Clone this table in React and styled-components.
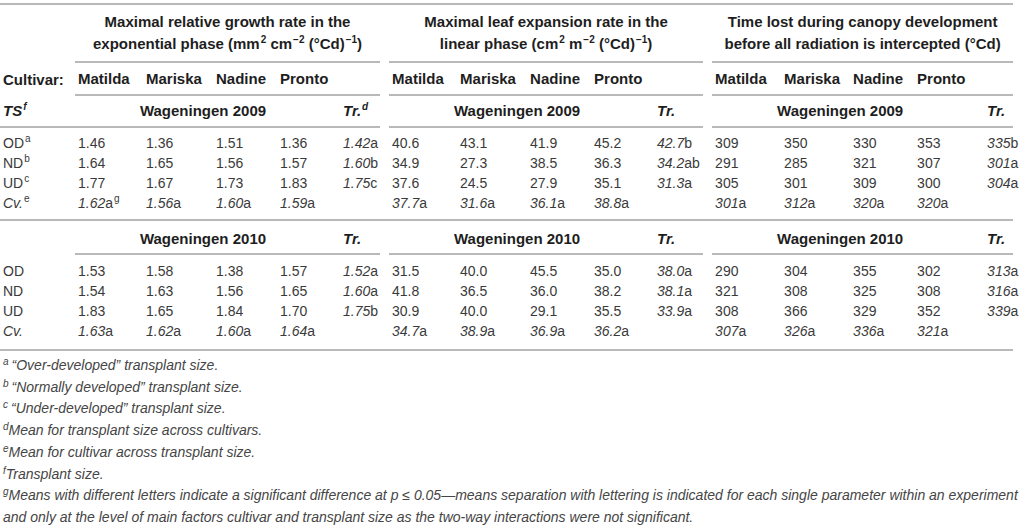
import React from "react";
import styled, { createGlobalStyle } from "styled-components";

const GlobalStyle = createGlobalStyle`
  body {
    margin: 0;
    background: #fff;
    font-family: "Liberation Sans", Arial, sans-serif;
    color: #3a3a3a;
  }
`;

const RULE = "2px solid #b9b9b9";

const Page = styled.div`
  width: 1013px;
  padding-top: 3px;
`;

const Table = styled.table`
  width: 1013px;
  table-layout: fixed;
  border-collapse: separate;
  border-spacing: 0;
  border-top: ${RULE};
  font-size: 14px;
`;

const Col = styled.col`
  width: ${(p) => p.$w}px;
`;

const Cell = styled.td`
  padding: ${(p) => p.$pt || 0}px ${(p) => p.$pr || 0}px ${(p) => p.$pb || 0}px 3px;
  line-height: 20px;
  white-space: nowrap;
  vertical-align: middle;
  text-align: ${(p) => (p.$center ? "center" : "left")};
  border-bottom: ${(p) => (p.$rule ? RULE : "none")};
  font-style: ${(p) => (p.$italic ? "italic" : "normal")};
`;

const HeadCell = styled(Cell)`
  font-size: 15px;
  font-weight: bold;
  color: #1e1e1e;
`;

const TitleCell = styled.td`
  padding: 6px 0;
  font-size: 15px;
  line-height: 22px;
  text-align: center;
  font-weight: bold;
  color: #1e1e1e;
  white-space: nowrap;
  border-bottom: ${RULE};
`;

const Gap = styled.td`
  padding: 0;
  border-bottom: ${(p) => (p.$rule ? RULE : "none")};
`;

const Sup = styled.sup`
  font-size: 10px;
  line-height: 0;
  vertical-align: 6px;
  margin-left: 1px;
`;

const Num = styled.i`
  font-style: italic;
`;

const Notes = styled.div`
  margin-top: 4px;
  padding-left: 3px;
  font-size: 14px;
  line-height: 21.7px;
  font-style: italic;
  color: #454545;
`;

const Note = styled.div`
  white-space: nowrap;
`;

const NoteMark = styled.sup`
  font-size: 10px;
  line-height: 0;
  vertical-align: 5px;
  margin-right: ${(p) => (p.$tight ? 0 : 3)}px;
`;

const COLS = [75, 68, 70, 64, 63, 40, 9, 68, 70, 64, 63, 49, 9, 69, 69, 64, 70, 29];
const CULTIVARS = ["Matilda", "Mariska", "Nadine", "Pronto"];

const GROUPS = [
  {
    title: [
      "Maximal relative growth rate in the",
      <>
        exponential phase (mm<Sup>2</Sup> cm<Sup>−2</Sup> (°Cd)<Sup>−1</Sup>)
      </>,
    ],
    shift: 12,
  },
  {
    title: [
      "Maximal leaf expansion rate in the",
      <>
        linear phase (cm<Sup>2</Sup> m<Sup>−2</Sup> (°Cd)<Sup>−1</Sup>)
      </>,
    ],
    shift: 12,
  },
  {
    title: ["Time lost during canopy development", "before all radiation is intercepted (°Cd)"],
    shift: 19,
  },
];

const YEARS = [
  {
    year: 2009,
    labels: [["OD", "a"], ["ND", "b"], ["UD", "c"]],
    cvNote: "e",
    pt: 5,
    pb: 6,
    data: [
      {
        rows: [
          ["1.46", "1.36", "1.51", "1.36", "1.42a"],
          ["1.64", "1.65", "1.56", "1.57", "1.60b"],
          ["1.77", "1.67", "1.73", "1.83", "1.75c"],
        ],
        cv: ["1.62a|g", "1.56a", "1.60a", "1.59a"],
      },
      {
        rows: [
          ["40.6", "43.1", "41.9", "45.2", "42.7b"],
          ["34.9", "27.3", "38.5", "36.3", "34.2ab"],
          ["37.6", "24.5", "27.9", "35.1", "31.3a"],
        ],
        cv: ["37.7a", "31.6a", "36.1a", "38.8a"],
      },
      {
        rows: [
          ["309", "350", "330", "353", "335b"],
          ["291", "285", "321", "307", "301a"],
          ["305", "301", "309", "300", "304a"],
        ],
        cv: ["301a", "312a", "320a", "320a"],
      },
    ],
  },
  {
    year: 2010,
    labels: [["OD"], ["ND"], ["UD"]],
    pt: 6,
    pb: 8,
    data: [
      {
        rows: [
          ["1.53", "1.58", "1.38", "1.57", "1.52a"],
          ["1.54", "1.63", "1.56", "1.65", "1.60a"],
          ["1.83", "1.65", "1.84", "1.70", "1.75b"],
        ],
        cv: ["1.63a", "1.62a", "1.60a", "1.64a"],
      },
      {
        rows: [
          ["31.5", "40.0", "45.5", "35.0", "38.0a"],
          ["41.8", "36.5", "36.0", "38.2", "38.1a"],
          ["30.9", "40.0", "29.1", "35.5", "33.9a"],
        ],
        cv: ["34.7a", "38.9a", "36.9a", "36.2a"],
      },
      {
        rows: [
          ["290", "304", "355", "302", "313a"],
          ["321", "308", "325", "308", "316a"],
          ["308", "366", "329", "352", "339a"],
        ],
        cv: ["307a", "326a", "336a", "321a"],
      },
    ],
  },
];

const Mean = ({ value }) => {
  const [main, note] = value.split("|");
  const [, num, letters] = main.match(/^([\d.]+)([a-z]*)$/);
  return (
    <>
      <Num>{num}</Num>
      {letters}
      {note && <Sup>{note}</Sup>}
    </>
  );
};

const YearHeader = ({ year, first }) => {
  const pt = first ? 5 : 8;
  const pb = first ? 5 : 4;
  return (
    <tr>
      {first ? (
        <HeadCell $rule $italic $pt={pt} $pb={pb}>
          TS<Sup>f</Sup>
        </HeadCell>
      ) : (
        <HeadCell $pt={pt} $pb={pb} />
      )}
      {GROUPS.map((g, gi) => (
        <React.Fragment key={gi}>
          {gi > 0 && <Gap />}
          <HeadCell colSpan={4} $rule $center $pr={g.shift} $pt={pt} $pb={pb}>
            Wageningen {year}
          </HeadCell>
          <HeadCell $rule $italic $pt={pt} $pb={pb}>
            Tr.{first && gi === 0 && <Sup>d</Sup>}
          </HeadCell>
        </React.Fragment>
      ))}
    </tr>
  );
};

const YearBlock = ({ y, first }) => (
  <>
    <YearHeader year={y.year} first={first} />
    {y.labels.map(([label, note], ri) => (
      <tr key={label}>
        <Cell $pt={ri === 0 ? y.pt : 0}>
          {label}
          {note && <Sup>{note}</Sup>}
        </Cell>
        {y.data.map((g, gi) => (
          <React.Fragment key={gi}>
            {gi > 0 && <Gap />}
            {g.rows[ri].slice(0, 4).map((v, vi) => (
              <Cell key={vi} $pt={ri === 0 ? y.pt : 0}>
                {v}
              </Cell>
            ))}
            <Cell $pt={ri === 0 ? y.pt : 0}>
              <Mean value={g.rows[ri][4]} />
            </Cell>
          </React.Fragment>
        ))}
      </tr>
    ))}
    <tr>
      <Cell $rule $pb={y.pb}>
        <Num>Cv.</Num>
        {y.cvNote && <Sup>{y.cvNote}</Sup>}
      </Cell>
      {y.data.map((g, gi) => (
        <React.Fragment key={gi}>
          {gi > 0 && <Gap $rule />}
          {g.cv.map((v, vi) => (
            <Cell key={vi} $rule $pb={y.pb}>
              <Mean value={v} />
            </Cell>
          ))}
          <Cell $rule $pb={y.pb} />
        </React.Fragment>
      ))}
    </tr>
  </>
);

const NOTES = [
  ["a", "“Over-developed” transplant size."],
  ["b", "“Normally developed” transplant size."],
  ["c", "“Under-developed” transplant size."],
  ["d", "Mean for transplant size across cultivars.", true],
  ["e", "Mean for cultivar across transplant size.", true],
  ["f", "Transplant size.", true],
  [
    "g",
    "Means with different letters indicate a significant difference at p ≤ 0.05—means separation with lettering is indicated for each single parameter within an experiment",
    true,
  ],
];

export default function App() {
  return (
    <Page>
      <GlobalStyle />
      <Table>
        <colgroup>
          {COLS.map((w, i) => (
            <Col key={i} $w={w} />
          ))}
        </colgroup>
        <tbody>
          <tr>
            <Cell />
            {GROUPS.map((g, gi) => (
              <React.Fragment key={gi}>
                {gi > 0 && <Gap />}
                <TitleCell colSpan={5}>
                  {g.title[0]}
                  <br />
                  {g.title[1]}
                </TitleCell>
              </React.Fragment>
            ))}
          </tr>
          <tr>
            <HeadCell $pt={6} $pb={5}>
              Cultivar:
            </HeadCell>
            {GROUPS.map((g, gi) => (
              <React.Fragment key={gi}>
                {gi > 0 && <Gap />}
                {CULTIVARS.map((c) => (
                  <HeadCell key={c} $rule $pt={6} $pb={5}>
                    {c}
                  </HeadCell>
                ))}
                <HeadCell $rule />
              </React.Fragment>
            ))}
          </tr>
          {YEARS.map((y, i) => (
            <YearBlock key={y.year} y={y} first={i === 0} />
          ))}
        </tbody>
      </Table>
      <Notes>
        {NOTES.map(([mark, text, tight]) => (
          <Note key={mark}>
            <NoteMark $tight={tight}>{mark}</NoteMark>
            {text}
          </Note>
        ))}
        <Note>
          and only at the level of main factors cultivar and transplant size as the two-way interactions were not
          significant.
        </Note>
      </Notes>
    </Page>
  );
}
